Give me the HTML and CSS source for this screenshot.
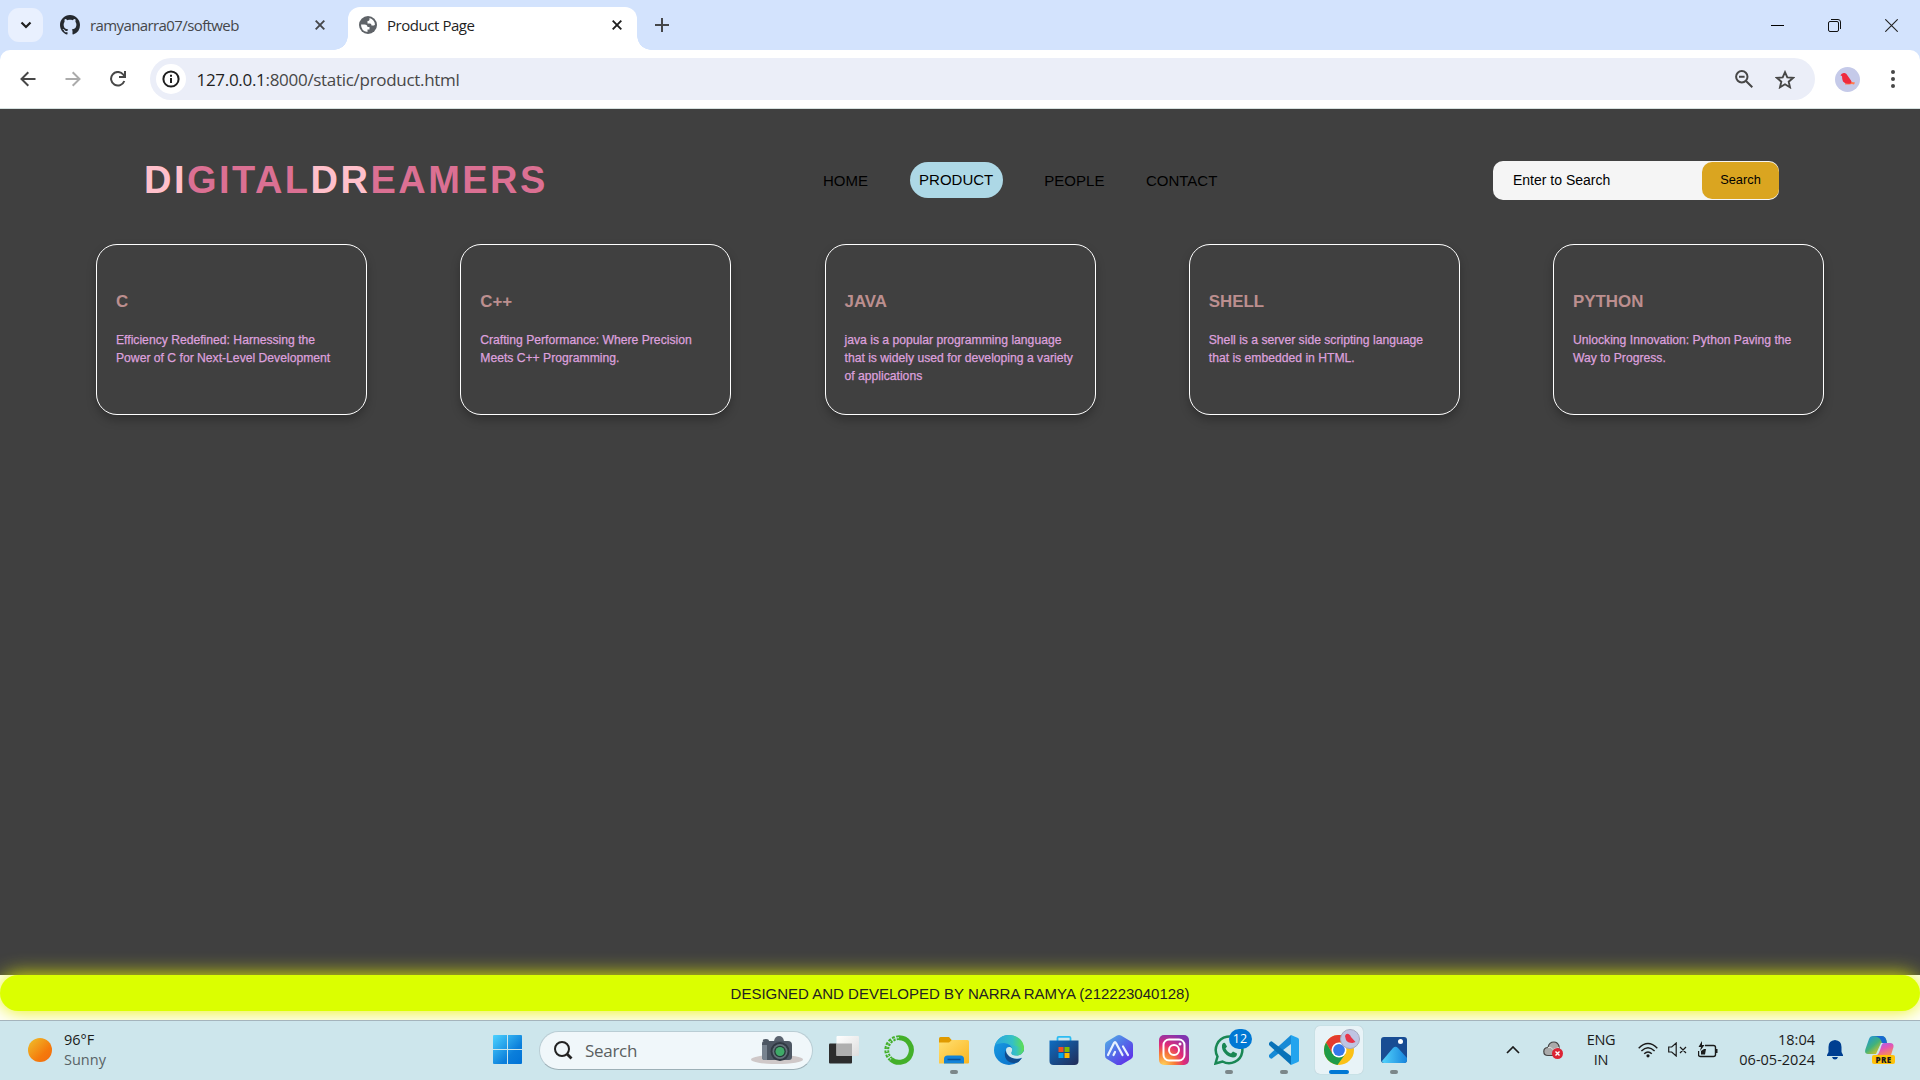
FILE: index.html
```html
<!DOCTYPE html>
<html lang="en">
<head>
<meta charset="utf-8">
<title>Product Page</title>
<link rel="stylesheet" href="styles.css">
</head>
<body>
<div class="screen">
  <header class="tabstrip">
    <div class="tab-search"><svg width="12" height="8" viewBox="0 0 12 8" fill="none" stroke="#1f1f1f" stroke-width="2.2"><path d="M1.500 1.500 6 6l4.500-4.500"/></svg></div>
    <div class="tab tab-idle">
      <svg width="20" height="20" viewBox="0 0 16 16" fill="#24292f"><path d="M8 0C3.580 0 0 3.580 0 8c0 3.540 2.290 6.530 5.470 7.590.4.070.55-.17.55-.38 0-.19-.01-.82-.01-1.490-2.010.37-2.530-.49-2.690-.94-.09-.23-.48-.94-.82-1.130-.28-.15-.68-.52-.01-.53.63-.01 1.080.58 1.230.82.72 1.210 1.870.87 2.330.66.070-.52.28-.87.51-1.070-1.780-.2-3.640-.89-3.640-3.950 0-.87.31-1.590.82-2.150-.08-.2-.36-1.020.08-2.120 0 0 .67-.21 2.200.82.64-.18 1.320-.27 2-.27s1.360.09 2 .27c1.530-1.040 2.200-.82 2.200-.82.44 1.100.16 1.920.08 2.120.51.56.82 1.270.82 2.150 0 3.070-1.870 3.750-3.650 3.950.29.25.54.73.54 1.480 0 1.070-.01 1.930-.01 2.200 0 .21.15.46.55.38A8.010 8.010 0 0 0 16 8c0-4.420-3.580-8-8-8z"/></svg>
      <span class="tab-title title-idle">ramyanarra07/softweb</span>
      <svg class="tab-close" width="10" height="10" viewBox="0 0 10 10" stroke="#45474a" stroke-width="1.900"><path d="M.7.7l8.600 8.600M9.300.7.7 9.300"/></svg>
    </div>
    <div class="tab tab-active">
      <svg width="18" height="18" viewBox="0 0 18 18"><circle cx="9" cy="9" r="9" fill="#5f6368"/><path d="M2 8.500h3.500q3 0 3 2.500h2v2.500H8.500V16Q2 15 2 8.500zM10.500 2v1.500Q10.500 5 8.500 5v2.500h2.500q1.500 0 1.500 2H15l1-1Q15.500 3.500 10.500 2z" fill="#fff"/></svg>
      <span class="tab-title title-active">Product Page</span>
      <svg class="tab-close" width="10" height="10" viewBox="0 0 10 10" stroke="#1f1f1f" stroke-width="1.900"><path d="M.7.7l8.600 8.600M9.300.7.7 9.300"/></svg>
    </div>
    <svg class="new-tab" width="14" height="14" viewBox="0 0 14 14" stroke="#45474a" stroke-width="2"><path d="M7 0v14M0 7h14"/></svg>
    <div class="window-buttons">
      <svg width="13" height="13" viewBox="0 0 13 13" stroke="#000"><path d="M0 6.500h13"/></svg>
      <svg width="13" height="13" viewBox="0 0 13 13" fill="none" stroke="#111"><rect x=".5" y="2.500" width="10" height="10" rx="1.500"/><path d="M3 .5h7q2.500 0 2.500 2.500v7"/></svg>
      <svg width="13" height="13" viewBox="0 0 13 13" stroke="#222" stroke-width="1.100"><path d="M.3.3l12.400 12.400M12.700.3.3 12.700"/></svg>
    </div>
  </header>

  <div class="toolbar-wrap">
  <div class="toolbar">
    <div class="nav-buttons">
      <svg width="16" height="16" viewBox="0 0 16 16" fill="none" stroke="#474747" stroke-width="2"><path d="M15.500 8H2M8.300 1.200 1.500 8l6.800 6.800"/></svg>
      <svg width="16" height="16" viewBox="0 0 16 16" fill="none" stroke="#ababab" stroke-width="2"><path d="M.5 8H14M7.700 1.200 14.500 8l-6.800 6.800"/></svg>
      <svg width="16" height="16" viewBox="0 0 16 16" fill="none" stroke="#474747" stroke-width="2"><path d="M14.300 10A6.800 6.800 0 1 1 13.200 3.500L15 6M15 0v6H9"/></svg>
    </div>
    <div class="omnibox">
      <div class="site-info"><svg width="18" height="18" viewBox="0 0 18 18" fill="none" stroke="#1f1f1f" stroke-width="2"><circle cx="9" cy="9" r="7.600"/><path d="M9 8v5M9 4.700v2"/></svg></div>
      <span class="url"><span class="url-host">127.0.0.1</span>:8000/static/product.html</span>
      <svg width="18" height="18" viewBox="0 0 18 18" fill="none" stroke="#474747" stroke-width="2"><circle cx="6.800" cy="6.800" r="5.700"/><path d="M11 11l6.300 6.300M4 6.800h5.600"/></svg>
      <svg class="star" width="20" height="19" viewBox="0 0 20 19" fill="none" stroke="#474747" stroke-width="1.900"><path d="M10 2.200l2.300 5.200 5.700.5-4.300 3.800 1.300 5.600L10 14.300l-5 3 1.300-5.600L2 7.900l5.700-.5z"/></svg>
    </div>
    <svg class="avatar" width="25" height="25" viewBox="0 0 25 25"><circle cx="12.500" cy="12.500" r="12.500" fill="#c5cae9"/><path d="M12 10l5 5 3 .5-1 2-2-.5-3 .5-4 0z" fill="#ff7a50"/><path d="M5.500 8.500q1-3 4-2.500 2 .3 3 2.500l3.500 5q1 2-.5 3-5 1-7.500-2Q7 12 7 9z" fill="#ef2b3f"/></svg>
    <svg class="menu-dots" width="4" height="18" viewBox="0 0 4 18" fill="#474747"><circle cx="2" cy="2" r="2"/><circle cx="2" cy="9" r="2"/><circle cx="2" cy="16" r="2"/></svg>
  </div>
  </div>

  <main class="page">
    <section class="content">
      <nav class="site-nav">
        <div class="logo"><span class="logo-light">DI</span>GITAL<span class="logo-light">DR</span>EAMERS</div>
        <ul class="links">
          <li>HOME</li><li class="current">PRODUCT</li><li>PEOPLE</li><li>CONTACT</li>
        </ul>
        <div class="search"><span class="search-hint">Enter to Search</span><button class="search-button">Search</button></div>
      </nav>
      <div class="cards">
        <article class="card"><h3>C</h3><p>Efficiency Redefined: Harnessing the<br>Power of C for Next-Level Development</p></article>
        <article class="card"><h3>C++</h3><p>Crafting Performance: Where Precision<br>Meets C++ Programming.</p></article>
        <article class="card"><h3>JAVA</h3><p>java is a popular programming language<br>that is widely used for developing a variety<br>of applications</p></article>
        <article class="card"><h3>SHELL</h3><p>Shell is a server side scripting language<br>that is embedded in HTML.</p></article>
        <article class="card"><h3>PYTHON</h3><p>Unlocking Innovation: Python Paving the<br>Way to Progress.</p></article>
      </div>
    </section>
    <footer class="credit">DESIGNED AND DEVELOPED BY NARRA RAMYA (212223040128)</footer>
  </main>

  <footer class="taskbar">
    <div class="weather"><span class="sun"></span><div class="weather-text"><div>96°F</div><div class="muted">Sunny</div></div></div>
    <svg class="start" width="29" height="29" viewBox="0 0 29 29"><defs><linearGradient id="win" x2="1" y2="1" gradientUnits="objectBoundingBox"><stop stop-color="#4dd2ff"/><stop offset=".65" stop-color="#0b7fdb"/><stop offset="1" stop-color="#0072d6"/></linearGradient></defs><path fill="url(#win)" d="M1 0h13v14H0V1q0-1 1-1zM15 0h13q1 0 1 1v13H15zM0 15h14v14H1q-1 0-1-1zM15 15h14v13q0 1-1 1H15z"/></svg>
    <div class="task-search">
      <svg width="19" height="19" viewBox="0 0 19 19" fill="none" stroke="#222" stroke-width="2"><circle cx="8" cy="8" r="7"/><path stroke-width="2.800" d="M13 13l4.500 4.500"/></svg>
      <span class="task-search-text">Search</span>
      <svg class="camera" width="52" height="28" viewBox="0 0 52 28"><ellipse cx="26" cy="23.500" rx="26" ry="4.500" fill="#cfc8c8"/><path d="M23 5q1-5 5-5t5 5z" fill="#5b6470"/><path d="M12 5q-1-2 3-2 3 0 3 2h19q4 0 4 4v12q0 3-3 3H14q-3 0-3-3V8q0-3 2-3z" fill="#4d5763"/><path d="M11 9h5v15h-3q-2 0-2-3z" fill="#78838f"/><circle cx="29" cy="15.500" r="9.500" fill="#303943"/><circle cx="29" cy="15.500" r="7.500" fill="#64717b"/><circle cx="29" cy="15.500" r="5.800" fill="#253a38"/><circle cx="29" cy="15.500" r="4.500" fill="#3faa68"/></svg>
    </div>
    <div class="apps">
      <div class="app"><svg width="30" height="30" viewBox="0 0 30 30"><defs><linearGradient id="tv" x2="1" y2="1"><stop stop-color="#fff"/><stop offset="1" stop-color="#ddd"/></linearGradient></defs><rect y="8.500" width="23" height="20" rx="1" fill="#2d2d2d"/><rect x="7.500" y="1" width="22.500" height="20" rx="1" fill="url(#tv)"/><path d="M7.500 8.500H23V21H7.500z" fill="#afafaf"/></svg></div>
      <div class="app"><svg width="30" height="30" viewBox="0 0 30 30" fill="none"><path d="M15 2.700A12.300 12.300 0 1 1 7 24.300" stroke="#43b02a" stroke-width="5"/><path d="M15 2.700A12.300 12.300 0 0 0 7 24.300" stroke="#43b02a" stroke-width="4.800" stroke-dasharray="2.600 1.300"/><path d="M15 2.700A12.300 12.300 0 0 0 7 24.300" stroke="#cfe7ec" stroke-width="1" stroke-dasharray="3 1.500"/></svg></div>
      <div class="app running"><svg width="30" height="30" viewBox="0 0 30 30"><defs><linearGradient id="fo" x2="1" y2="1"><stop stop-color="#ffe072"/><stop offset="1" stop-color="#fbb51f"/></linearGradient></defs><path d="M0 3.500q0-1.500 1.500-1.500H10l3 3.500-3 4H0z" fill="#e09a00"/><path d="M0 7.500h10L13 5h15.500Q30 5 30 6.500v21q0 1-1 1H0z" fill="url(#fo)"/><path d="M5 28.500V24q0-3.500 3.500-3.500h13Q25 20.500 25 24v4.500z" fill="#1283d8"/><path d="M8.500 24.500h13" stroke="#0a4f92" stroke-width="1.500"/></svg></div>
      <div class="app"><svg width="30" height="30" viewBox="0 0 30 30"><defs><linearGradient id="e1" x2="1"><stop stop-color="#2aa6e0"/><stop offset=".6" stop-color="#35c1c4"/><stop offset="1" stop-color="#5ee04e"/></linearGradient><linearGradient id="e2" y2="1"><stop stop-color="#1aa0e4"/><stop offset="1" stop-color="#0668c6"/></linearGradient></defs><circle cx="15" cy="15" r="15" fill="url(#e2)"/><path d="M1 10C3 4 8 0 15 0c9 0 15 6 15 13 0 5-4 7.500-8 7.500-3 0-4.500-1-4.500-2.300 0-1 1-1.200 1-3.200C18.500 11 14 8 10 8c-4 0-7 1-9 2z" fill="url(#e1)"/><path d="M11.500 15.500c-3 8 4 15 13 11.500l3.500-4c-5 2-13 1-16.500-7.500z" fill="#104c8e"/><path d="M12 15c0-3 4-4 6-1.500 1 2-1 3.500-.5 5 1 2 6 3 10 .5L30 16v6.500l-2 .2c-8 3-16-1.500-16-7.700z" fill="#cfe7ec"/><path d="M10 8c5 0 8.500 3 8.500 7 0 2-1 2.200-1 3.200 0 1.300 1.500 2.300 4.500 2.300 4 0 8-2.500 8-7.500z" fill="url(#e1)"/></svg></div>
      <div class="app"><svg width="30" height="30" viewBox="0 0 30 30"><defs><linearGradient id="st" x2="1" y2="1"><stop stop-color="#0d6dc2"/><stop offset="1" stop-color="#222c57"/></linearGradient></defs><path d="M8.500 7V3q0-1.200 1.200-1.200h10.600q1.200 0 1.200 1.200v4" fill="none" stroke="#2cbcf2" stroke-width="1.800"/><path d="M.5 5.500h29V26q0 4-4 4h-21q-4 0-4-4z" fill="url(#st)"/><path d="M9.500 12h5v5h-5z" fill="#f25022"/><path d="M15.500 12h5v5h-5z" fill="#7fba00"/><path d="M9.500 18h5v5h-5z" fill="#00a4ef"/><path d="M15.500 18h5v5h-5z" fill="#ffb900"/></svg></div>
      <div class="app"><svg width="30" height="30" viewBox="0 0 30 30"><defs><linearGradient id="hx" x2=".9" y2="1"><stop stop-color="#52b5e5"/><stop offset=".5" stop-color="#536be8"/><stop offset="1" stop-color="#6125e8"/></linearGradient></defs><path d="M13 .5q2-1 4 0l10 6q2 1 2 3.200v11q0 2-2 3.200l-10 6q-2 1-4 0l-10-6q-2-1-2-3.200v-11Q1 7.500 3 6.500z" fill="url(#hx)"/><path d="M4 20 10 8q1-2 2 0l6.500 12M9.500 20l1.500-3M19 11.500l5 8.500" fill="none" stroke="#e9f2ff" stroke-width="2.200" stroke-linecap="round" stroke-linejoin="round"/></svg></div>
      <div class="app"><svg width="30" height="30" viewBox="0 0 30 30"><defs><radialGradient id="ig" cx=".15" cy="1" r="1.100"><stop stop-color="#ffd35a"/><stop offset=".35" stop-color="#f77a37"/><stop offset=".62" stop-color="#e12c78"/><stop offset="1" stop-color="#8134af"/></radialGradient></defs><rect width="30" height="30" rx="5" fill="url(#ig)"/><g fill="none" stroke="#fff" stroke-width="2"><rect x="4.500" y="4.500" width="21" height="21" rx="5.500"/><circle cx="15" cy="15" r="5"/></g><circle cx="21" cy="9" r="1.500" fill="#fff"/></svg></div>
      <div class="app running"><svg width="30" height="30" viewBox="0 0 30 30"><path d="M1.500 28.500l2-7A13.300 13.300 0 1 1 8.500 26.500z" fill="none" stroke="#198754" stroke-width="2.500"/><path d="M8 10q1-3 3-2l2 3.500-1.500 2q2 4 5.500 5l2-2 4 2q0 4-4 4C13 22 7 16 8 10z" fill="#198754"/></svg><span class="badge">12</span></div>
      <div class="app running"><svg width="30" height="30" viewBox="0 0 30 30"><path d="M22 0l7 3q1 .5 1 1.500v21q0 1-1 1.500l-7 3z" fill="#23a4ee"/><path d="M22 0v9L3 23.500q-1 .5-2-.5l-1-1q-.8-1 0-2z" fill="#168ad6"/><path d="M22 30v-9L3 6.500q-1-.5-2 .5L0 8q-.8 1 0 2z" fill="#0872b8"/></svg></div>
      <div class="app focused"><svg width="30" height="30" viewBox="0 0 30 30"><circle cx="15" cy="15" r="15" fill="#fbc116"/><path d="M2 7.500A15 15 0 0 1 28 7.500H15L8.500 18.700z" fill="#e33b2e"/><path d="M8.500 18.700 2 7.500A15 15 0 0 0 13.500 29.900l8-11.200z" fill="#1e9b48"/><circle cx="15" cy="15" r="7.500" fill="#fff"/><circle cx="15" cy="15" r="5.900" fill="#3478ea"/></svg>
        <svg class="profile-badge" width="20" height="20" viewBox="0 0 20 20"><circle cx="10" cy="10" r="9.500" fill="#bfc4e2" stroke="#a5a8bd"/><path d="M5 7q1-3 3.500-2 2 1 2.500 3l4.500 5-3 1q-5 0-6.500-3z" fill="#e83449"/></svg></div>
      <div class="app running"><svg width="26" height="26" viewBox="0 0 26 26"><defs><linearGradient id="ph" x2="1"><stop stop-color="#53d3fb"/><stop offset="1" stop-color="#1784dc"/></linearGradient></defs><rect width="26" height="26" rx="3" fill="#184c93"/><path d="M1 24 12 11q2.500-2.500 5 0l9 10v2q0 3-3 3H3q-2 0-2-2z" fill="url(#ph)"/><circle cx="19.500" cy="4.500" r="2.500" fill="#fff"/></svg></div>
    </div>
    <div class="tray">
      <svg class="chevron" width="14" height="8" viewBox="0 0 14 8" fill="none" stroke="#1b1b1b" stroke-width="1.700"><path d="M1 7l6-6 6 6"/></svg>
      <svg class="cloud" width="20" height="18" viewBox="0 0 20 18"><path d="M5 14.500Q.8 14.500.8 10.500T5 6.500q1-5.500 6-5.500 3.500 0 5 4v6l-6 3.500z" fill="#aaa" stroke="#444" stroke-width="1.200"/><path d="M5 6.500q3-1 5 2l6-2" stroke="#ddd" fill="none"/><circle cx="14.500" cy="12.500" r="5.500" fill="#dc2434"/><path d="M12.500 10.500l4 4m0-4-4 4" stroke="#fff" stroke-width="1.400"/></svg>
      <div class="language"><div>ENG</div><div>IN</div></div>
      <svg class="wifi" width="20" height="16" viewBox="0 0 20 16" fill="none" stroke="#1b1b1b" stroke-width="1.400"><path d="M.7 6.200q9.300-9.400 18.600 0M3.400 9q6.600-6.600 13.200 0M6.200 11.700q3.800-3.600 7.600 0"/><circle cx="10" cy="13.800" r="1.600" fill="#1b1b1b" stroke="none"/></svg>
      <svg class="volume" width="19" height="15" viewBox="0 0 19 15" fill="none" stroke="#1b1b1b" stroke-width="1.200"><path d="M.7 5v5h3l4.500 4V1L3.700 5zM12 5l6 6m0-6-6 6"/></svg>
      <svg class="battery" width="20" height="17" viewBox="0 0 20 17" fill="none" stroke="#1b1b1b" stroke-width="1.400"><path d="M7 4.500h8.500q2 0 2 2v7q0 2-2 2h-13q-2 0-2-2V10"/><path d="M18.500 8v4" stroke-width="2"/><path d="M3 13.500V10l3-2h2l-1 5.500zM4 0 .5 6H3L2 10 6.500 4H4z" fill="#1b1b1b" stroke="none"/></svg>
      <div class="clock"><div>18:04</div><div class="date">06-05-2024</div></div>
      <svg class="bell" width="16" height="20" viewBox="0 0 16 20" fill="#003f91"><path d="M8 0Q1.500.5 1.500 7v5L0 15v1h16v-1l-1.500-3V7Q14.500.5 8 0zM5 17h6q-.8 2.500-3 2.500T5 17z"/></svg>
      <div class="copilot"><svg width="29" height="28" viewBox="0 0 29 28"><defs><linearGradient id="c1" y2="1"><stop stop-color="#1b8fe8"/><stop offset=".45" stop-color="#41b27b"/><stop offset=".8" stop-color="#e9c51b"/></linearGradient><linearGradient id="c2" x2=".5" y2="1"><stop stop-color="#9a67f0"/><stop offset=".5" stop-color="#e255b8"/><stop offset="1" stop-color="#f78562"/></linearGradient></defs><path d="M8 0h9q4 0 5 7h-6L11 18H3q-4 0-2.500-5L4 3q1-3 4-3z" fill="url(#c1)"/><path d="M9 0h8q4 0 5 7h-5q-1-6-8-7z" fill="#1769d1"/><path d="M19 7h6q4 0 3.500 4L26 19H12q2-1 4-8 1-4 3-4z" fill="url(#c2)"/></svg><span class="pre">PRE</span></div>
    </div>
  </footer>
</div>
</body>
</html>
```
FILE: styles.css
```css
* { box-sizing: border-box; }
body { margin: 0; overflow: hidden; font-family: "Liberation Sans", Arial, sans-serif; }
svg { display: block; flex: none; }
.screen { width: 1920px; height: 1080px; display: flex; flex-direction: column; }

.tabstrip { height: 50px; background: #d3e3fd; display: flex; align-items: center; padding-left: 8px; font-family: "Open Sans", "Noto Sans", sans-serif; }
.tab-search { width: 35px; height: 34px; border-radius: 11px; background: #e9f0fe; display: flex; align-items: center; justify-content: center; }
.tab { display: flex; align-items: center; height: 43px; align-self: flex-end; padding-bottom: 7px; }
.tab-idle { width: 305px; padding-left: 17px; padding-right: 23px; color: #45474a; }
.tab-active { width: 289px; padding-left: 11px; padding-right: 15px; background: #fff; border-radius: 12px 12px 0 0; position: relative; color: #1f1f1f; }
.tab-active::before, .tab-active::after { content: ""; position: absolute; bottom: 0; width: 14px; height: 14px; }
.tab-active::before { left: -14px; background: radial-gradient(circle at 0 0, transparent 13.5px, #fff 14px); }
.tab-active::after { right: -14px; background: radial-gradient(circle at 100% 0, transparent 13.5px, #fff 14px); }
.tab-title { font-size: 15px; line-height: 20px; white-space: nowrap; }
.title-idle { margin-left: 10px; letter-spacing: -0.6px; }
.title-active { margin-left: 10px; letter-spacing: -0.45px; }
.tab-close { margin-left: auto; }
.new-tab { margin-left: 18px; }
.window-buttons { margin-left: auto; display: flex; gap: 44px; padding-right: 22px; }

.toolbar-wrap { background: #d3e3fd; height: 59px; }
.toolbar { height: 59px; background: #fff; border-radius: 10px 10px 0 0; border-bottom: 1px solid #d5e0df; display: flex; align-items: center; padding-left: 20px; }
.nav-buttons { display: flex; gap: 29px; width: 130px; }
.omnibox { width: 1665px; height: 42px; border-radius: 21px; background: #ebeef8; display: flex; align-items: center; padding: 0 20px 0 6px; font-family: "Open Sans", "Noto Sans", sans-serif; }
.site-info { width: 30px; height: 30px; border-radius: 50%; background: #fff; display: flex; align-items: center; justify-content: center; }
.url { flex: 1; margin-left: 10.5px; font-size: 17px; letter-spacing: -0.3px; color: #474747; }
.url-host { color: #1f1f1f; }
.star { margin-left: 22px; }
.avatar { margin-left: 20px; }
.menu-dots { margin-left: 31px; }

.page { height: 911px; background: #fff; overflow: hidden; display: flex; flex-direction: column; }
.content { height: 866px; background: #404040; padding: 36px 96px 0; }
.site-nav { height: 70px; padding: 0 45px 0 48px; display: flex; align-items: center; }
.logo { width: 679px; font-size: 38px; font-weight: 700; letter-spacing: 2.48px; color: #db7093; }
.logo-light { color: #ffc0cb; }
.links { list-style: none; margin: 0; padding: 0; display: flex; align-items: center; font-size: 15px; color: #000; width: 670px; }
.links li { margin-right: 41.6px; line-height: 36px; padding-top: 1px; white-space: nowrap; }
.links .current { background: #add8e6; border-radius: 18px; padding: 0 9.5px; }
.search { width: 286px; height: 39px; border-radius: 10px; background: #f5f5f5; display: flex; align-items: center; padding-left: 20px; font-size: 14px; color: #000; }
.search-hint { flex: 1; white-space: nowrap; }
.search-button { width: 77px; height: 37px; border: 0; padding: 0 0 2px; border-radius: 10px; background: #daa520; font: 12.8px "Liberation Sans", Arial, sans-serif; color: #000; }
.cards { margin-top: 29px; display: flex; justify-content: space-between; }
.card { width: 271px; height: 171px; border: 1px solid #fff; border-radius: 21px; padding: 47px 0 0 19px; box-shadow: 0 5px 10px rgba(0,0,0,.25); }
.card h3 { margin: 0; font-size: 16.9px; line-height: 20px; font-weight: 700; color: #bc8f8f; }
.card p { margin: 19px 0 0; font-size: 12.17px; line-height: 18px; color: #dda0dd; white-space: nowrap; -webkit-text-stroke: .25px #dda0dd; }
.credit { height: 36px; border-radius: 20px; background: #dbff00; box-shadow: 0 0 20px #e8f000; display: flex; align-items: center; justify-content: center; font-size: 15px; color: #222; }

.taskbar { height: 60px; padding-bottom: 2px; background: #cde6ec; border-top: 1px solid #a5b4bc; display: flex; align-items: center; font-family: "Open Sans", "Noto Sans", sans-serif; font-size: 14.5px; line-height: 20px; color: #1b1b1b; }
.weather { width: 493px; padding-left: 28px; display: flex; align-items: center; gap: 12px; }
.sun { width: 24px; height: 24px; border-radius: 50%; background: linear-gradient(135deg, #efc22c, #f57a0c 65%, #f26a10); }
.muted { color: #596366; }
.task-search { margin-left: 17px; width: 274px; height: 39px; margin-top: 1px; border-radius: 20px; background: #f0f7fa; border: 1px solid #b9cdd4; border-bottom-color: #9db0b7; display: flex; align-items: center; padding: 0 9px 0 14px; }
.task-search-text { flex: 1; margin-left: 12px; padding-top: 1px; font-size: 17px; letter-spacing: -.3px; color: #5a5f61; }
.apps { display: flex; margin-left: 6.5px; gap: 7px; }
.app { width: 48px; height: 48px; border-radius: 5px; display: flex; align-items: center; justify-content: center; position: relative; }
.running::after, .focused::after { content: ""; position: absolute; bottom: 0; left: 20px; width: 8px; height: 4px; border-radius: 2px; background: #7b878a; }
.focused { background: #e8f3f7; box-shadow: 0 0 1px #9fb3ba; }
.focused::after { left: 14px; width: 20px; background: #0078d4; }
.badge { position: absolute; left: 24px; top: 3px; width: 23px; height: 20px; border-radius: 10px; background: #0078d4; color: #fff; font-size: 12.5px; line-height: 20px; text-align: center; }
.profile-badge { position: absolute; left: 25px; top: 3px; }
.tray { margin-left: auto; display: flex; align-items: center; padding-right: 25px; }
.cloud { margin-left: 23px; }
.language { margin-left: 19px; width: 38px; text-align: center; letter-spacing: -.3px; }
.wifi { margin-left: 18px; }
.volume { margin-left: 10px; }
.battery { margin-left: 11px; }
.clock { width: 97px; text-align: right; }
.bell { margin-left: 12px; }
.copilot { margin-left: 22px; width: 30px; height: 28px; position: relative; }
.pre { position: absolute; left: 7px; top: 19px; width: 23px; height: 9px; border-radius: 2px; background: #ffc20a; font-size: 8px; line-height: 9px; font-weight: 800; text-align: center; letter-spacing: .4px; }
```
